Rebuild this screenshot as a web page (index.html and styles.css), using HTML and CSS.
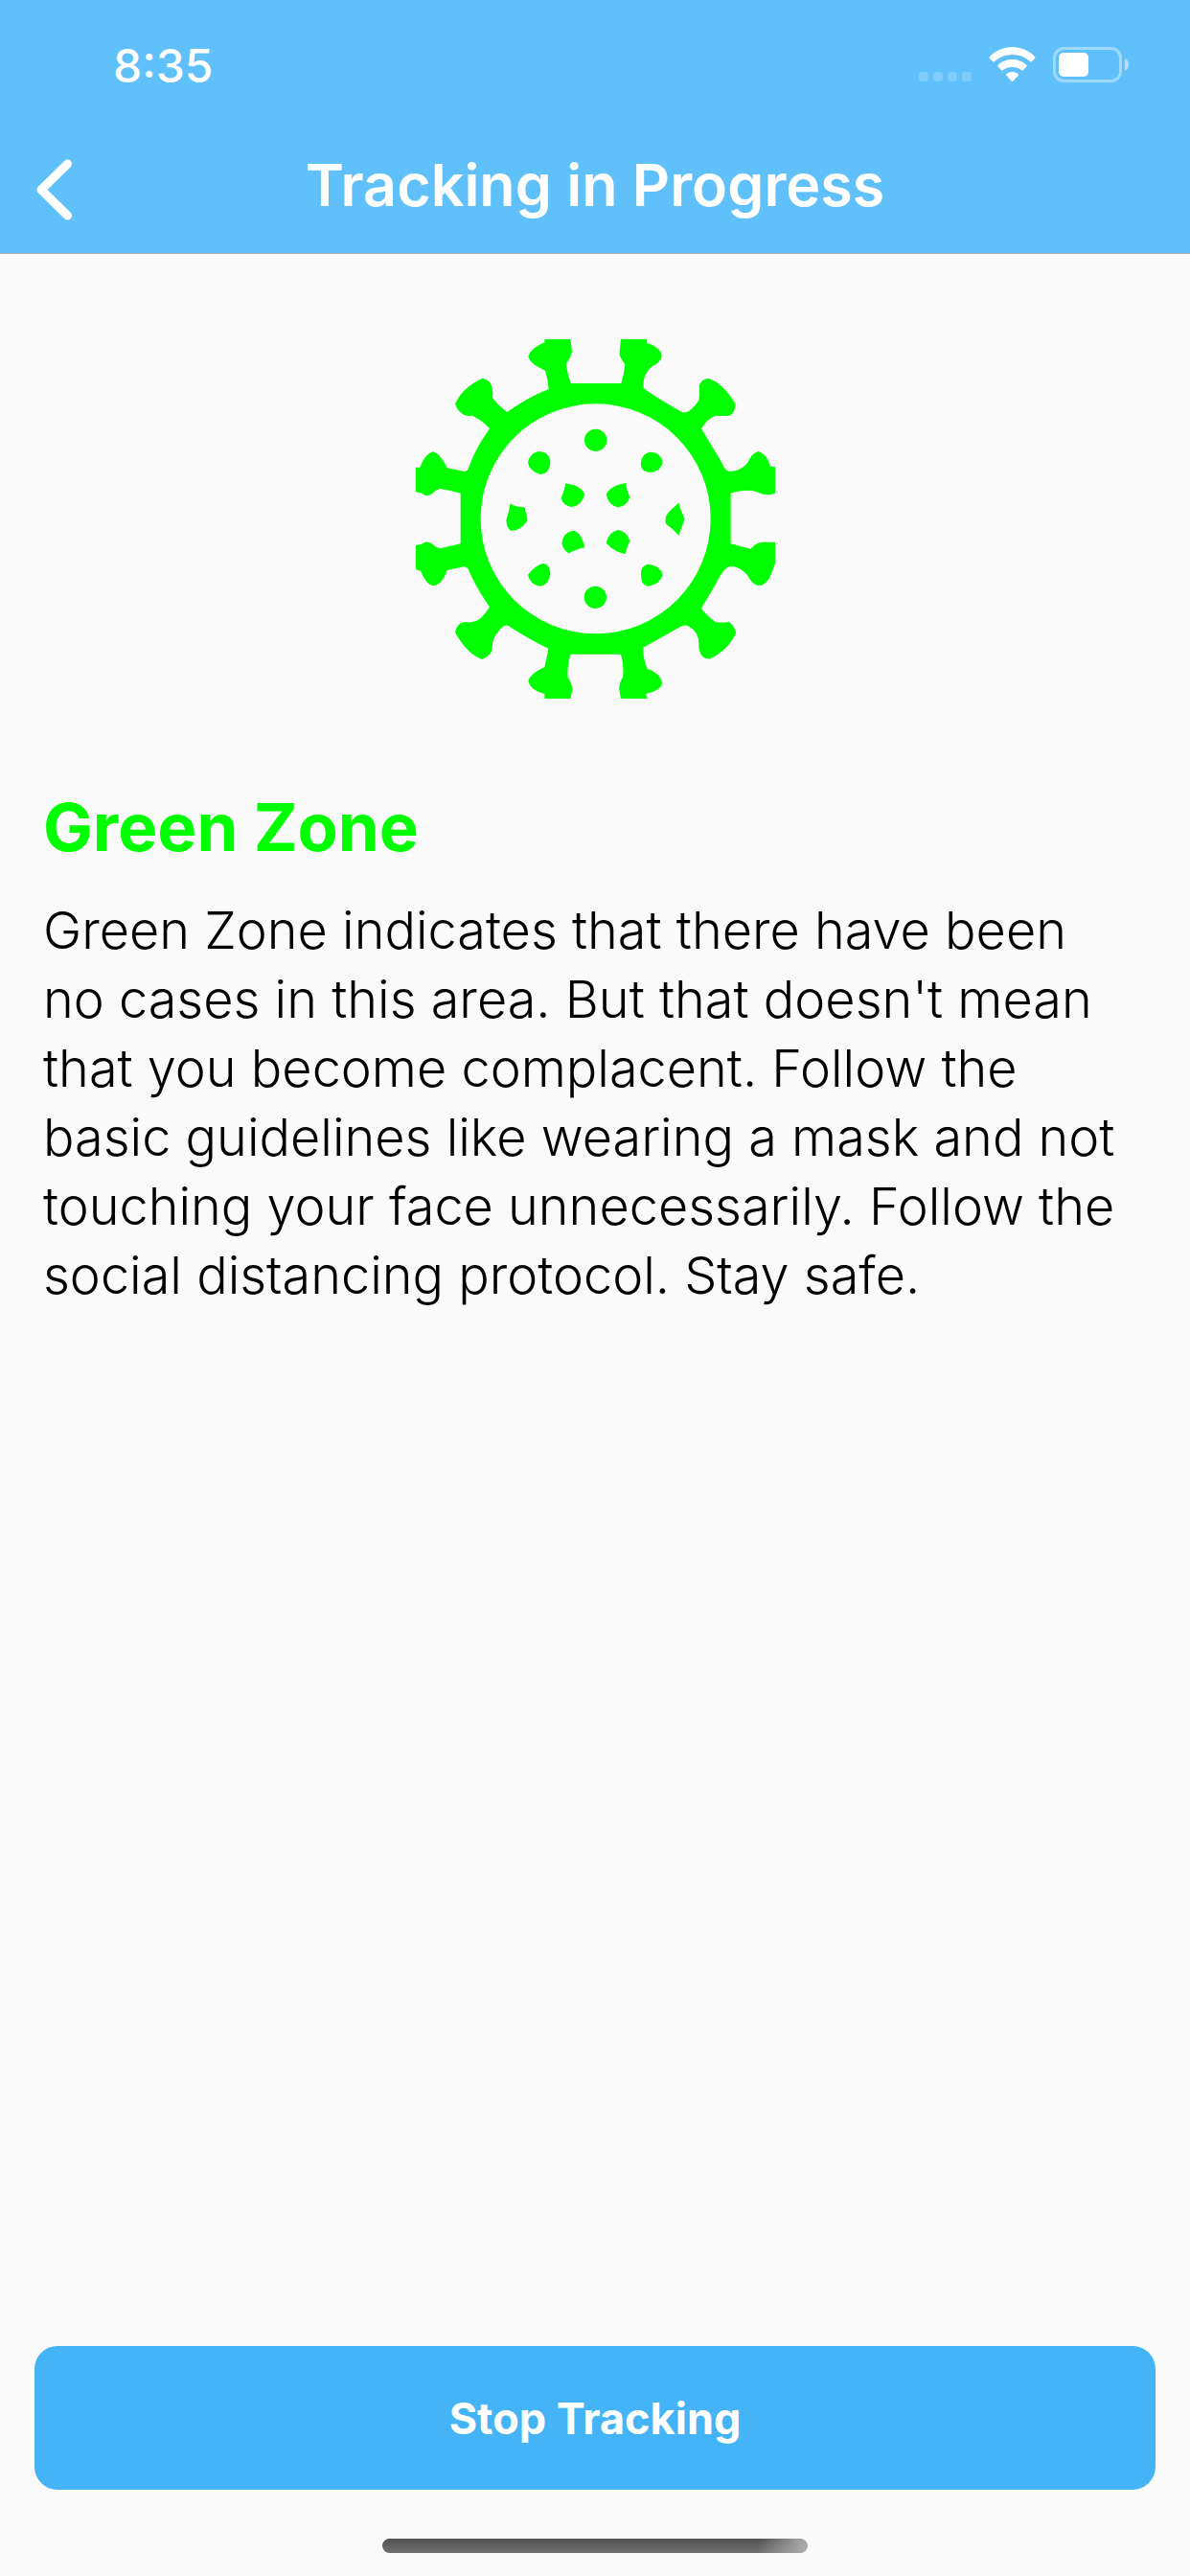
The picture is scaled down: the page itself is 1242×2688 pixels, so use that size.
FILE: index.html
```html
<!DOCTYPE html>
<html lang="en">
<head>
<meta charset="utf-8">
<meta name="viewport" content="width=device-width, initial-scale=1">
<title>Tracking in Progress</title>
<link rel="stylesheet" href="styles.css">
</head>
<body>
<header class="header">
  <div class="status">
    <time class="status-time">8:35</time>
    <svg class="status-icons" viewBox="0 0 219 38" width="219" height="38" fill="#fff" aria-hidden="true">
      <g opacity=".2">
        <rect x="0" y="26" width="10" height="10" rx="3"/>
        <rect x="15" y="26" width="10" height="10" rx="3"/>
        <rect x="30" y="26" width="10" height="10" rx="3"/>
        <rect x="45" y="26" width="10" height="10" rx="3"/>
      </g>
      <path d="M97.500 8Q108 8 116 15Q117 16 118 15L121 12Q122 11 121 10Q111 0 97.500 0Q84 0 74 10Q73 11 74 12L77 15Q78 16 79 15Q87 8 97.500 8Z"/>
      <path d="M97.500 21Q103 21 107 24Q108 25 109 24L112.500 20.500Q113 19.500 112 18.500Q106 13 97.500 13Q89 13 83 18.500Q82 19.500 82.500 20.500L86 24Q87 25 88 24Q92 21 97.500 21Z"/>
      <path d="M97.500 26Q101 26 103.500 28Q104.500 29 103.500 30L98.500 35.500Q97.500 36.500 96.500 35.500L91.500 30Q90.500 29 91.500 28Q94 26 97.500 26Z"/>
      <rect x="141.500" y="1.500" width="69" height="34" rx="10" fill="none" stroke="#fff" stroke-width="3" opacity=".4"/>
      <path d="M215 12Q219 14 219 18.500Q219 23 215 25Z" opacity=".5"/>
      <rect x="146" y="6" width="31" height="25" rx="5"/>
    </svg>
  </div>
  <div class="navbar">
    <button class="back" type="button" aria-label="Back">
      <svg viewBox="0 0 37 64" width="37" height="64" fill="none" stroke="#fff" stroke-width="9" stroke-linecap="round" stroke-linejoin="round" aria-hidden="true"><path d="M32.500 5L5 32L32.500 59"/></svg>
    </button>
    <h1 class="title">Tracking in Progress</h1>
  </div>
</header>
<main class="main">
  <svg class="virus" viewBox="42 42 1125 1125" fill="#0f0" role="img" aria-label="Virus">
    <path fill-rule="evenodd" d="M445 42H526L531 80Q528 98 512 120Q517 150 527 180H685Q694 150 697 120Q676 95 680 80L684 42H765V54C795 62 813 80 812 95C810 112 790 122 780 128Q750 155 755 195Q795 225 875 270Q893 273 905 260Q930 240 930 220V185Q940 163 960 165Q1005 180 1043 245Q1040 278 1020 282H980Q955 290 936 322L1000 428Q1010 453 1022 455Q1055 458 1080 430Q1095 396 1115 393Q1142 402 1152 440L1167 442V524Q1140 535 1115 522Q1085 508 1028 524V682L1090 698Q1110 675 1140 677H1167V745L1150 788Q1135 813 1115 814Q1095 810 1080 780Q1055 752 1025 753Q1005 758 980 810L936 884Q950 905 980 927Q1000 930 1022 927Q1038 937 1045 960Q1025 1010 965 1042Q932 1045 928 1005Q932 960 895 940Q885 934 870 942L753 1008Q755 1050 768 1075C790 1080 812 1100 813 1118Q812 1140 762 1152L767 1167H684L679 1140Q678 1118 690 1100Q695 1065 684 1028H526C518 1060 516 1080 518 1100Q535 1125 531 1145L526 1167H445V1152Q400 1140 394 1112Q398 1090 445 1068Q452 1040 457 1010Q395 980 330 938Q315 935 300 958Q280 980 281 1010Q280 1030 250 1044Q205 1030 165 960Q170 930 195 927Q225 932 245 915Q265 895 273 880Q230 820 205 760L195 753L140 765Q125 810 97 814Q75 812 57 768L42 762V688Q55 687 68 679Q82 672 96 685Q105 695 118 697L182 682V524Q150 515 118 510Q105 513 96 523Q80 540 60 524L42 520V443H55Q70 400 97 394Q118 400 140 445L195 456Q205 455 208 442Q230 380 273 322Q255 300 220 282Q180 285 165 245Q185 195 250 164Q288 170 282 224Q295 245 328 270Q390 225 458 198Q455 165 447 140Q400 120 394 97Q400 70 445 52ZM605 244A360 360 0 1 0 605 964A360 360 0 1 0 605 244Z"/>
    <circle cx="605" cy="358" r="35"/>
    <path d="M429 393Q463 396 463 430Q460 464 432 465Q396 455 393 427Q400 396 429 393ZM780 395Q812 398 815 430Q806 458 776 459Q748 458 746 432Q750 396 780 395Z"/>
    <path d="M510 494Q555 496 571 526Q562 564 530 567Q500 562 497 538Q508 515 510 494ZM700 492Q702 515 712 536Q704 564 675 568Q645 562 638 528Q650 500 700 492Z"/>
    <path d="M338 556Q348 567 383 568L392 608Q375 638 342 642Q326 635 325 608Q334 580 338 556ZM865 554Q872 580 884 605L865 656Q848 635 825 620Q818 595 840 577Z"/>
    <path d="M534 641Q560 645 571 694Q548 698 522 712Q504 704 499 680Q505 645 534 641ZM676 639Q705 645 712 674Q704 690 697 715Q660 705 638 680Q645 645 676 639Z"/>
    <path d="M440 744Q463 745 463 780Q455 814 430 815Q400 810 393 780Q415 750 440 744ZM770 746Q808 750 815 780Q806 810 770 815Q750 814 748 790Q742 750 770 746Z"/>
    <circle cx="604" cy="850" r="35"/>
  </svg>
  <h2 class="zone">Green Zone</h2>
  <p class="advice">Green Zone indicates that there have been no cases in this area. But that doesn't mean that you become complacent. Follow the basic guidelines like wearing a mask and not touching your face unnecessarily. Follow the social distancing protocol. Stay safe.</p>
</main>
<footer class="footer">
  <button class="stop" type="button">Stop Tracking</button>
  <div class="home-indicator"></div>
</footer>
</body>
</html>
```
FILE: styles.css
```css
* {
  box-sizing: border-box;
}

body {
  margin: 0;
  min-height: 100vh;
  display: flex;
  flex-direction: column;
  background: #fafafa;
  color: #000;
  font-family: Inter, "Liberation Sans", sans-serif;
}

button {
  border: 0;
  padding: 0;
  font: inherit;
  color: inherit;
  cursor: pointer;
}

.header {
  background: #60c0f9;
  border-bottom: 1px solid #a7abae;
  color: #fff;
}

.status {
  height: 132px;
  padding: 4px 64px 0 118px;
  display: flex;
  align-items: center;
  justify-content: space-between;
}

.status-time {
  font-size: 48px;
  font-weight: 500;
}

.navbar {
  height: 132px;
  padding: 0 38px;
  display: grid;
  grid-template-columns: 37px 1fr 37px;
  align-items: center;
}

.back {
  display: flex;
  background: none;
}

.title {
  margin: 0;
  padding-bottom: 10px;
  text-align: center;
  font-size: 61px;
  font-weight: 600;
}

.main {
  flex: 1;
  padding: 89px 45px 0;
}

.virus {
  display: block;
  width: 375px;
  height: 375px;
  margin: 0 auto;
}

.zone {
  margin: 90px 0 0;
  color: #0f0;
  font-size: 69px;
  line-height: 88px;
  font-weight: 700;
}

.advice {
  margin: 28px 0 0;
  padding-right: 20px;
  font-size: 54px;
  line-height: 72px;
  font-weight: 300;
}

.footer {
  padding: 36px 36px 24px;
  display: flex;
  flex-direction: column;
  gap: 51px;
}

.stop {
  height: 150px;
  border-radius: 24px;
  background: #45b4f6;
  color: #fff;
  font-size: 45px;
  font-weight: 700;
}

.home-indicator {
  align-self: center;
  width: 444px;
  height: 15px;
  border-radius: 8px;
  background:
    linear-gradient(100deg, transparent 88%, #aaa 99%),
    linear-gradient(#505050, #707070);
}
```
